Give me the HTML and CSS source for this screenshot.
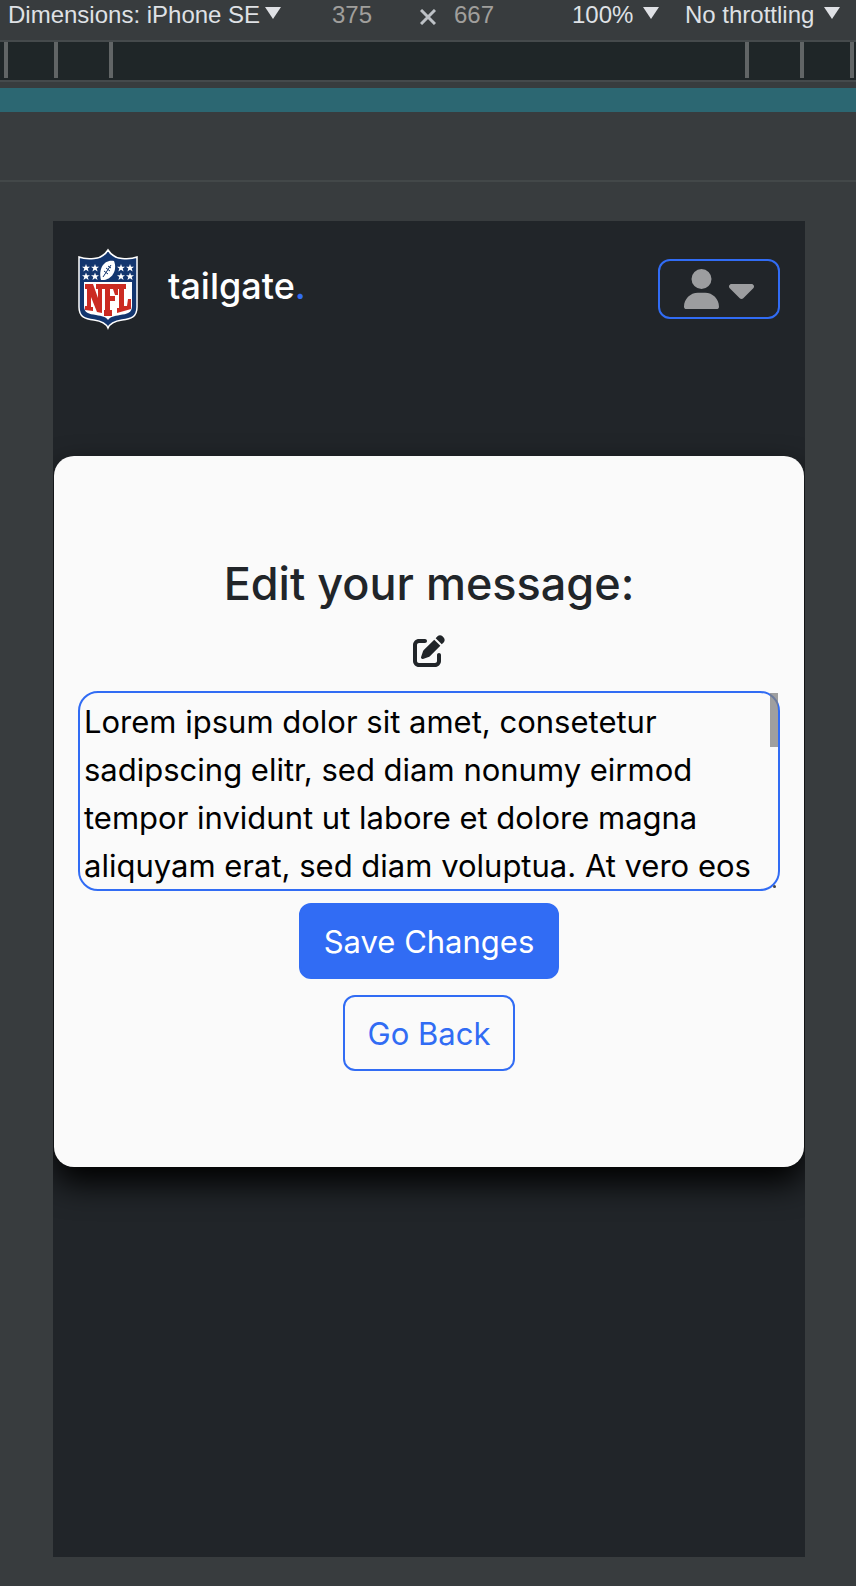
FILE: index.html
```html
<!DOCTYPE html>
<html lang="en">
<head>
<meta charset="utf-8">
<meta name="viewport" content="width=device-width, initial-scale=1">
<title>tailgate.</title>
<link rel="stylesheet" href="styles.css">
</head>
<body>
<div class="toolbar">
  <div class="picker picker-device">
    <select class="picker-select" aria-label="Device"><option>Dimensions: iPhone SE</option></select>
    <svg class="picker-arrow" viewBox="0 0 16 12" aria-hidden="true"><path d="M0 0h16L8 12z"/></svg>
  </div>
  <div class="size">
    <input class="size-input" type="text" value="375" aria-label="Width">
    <svg class="size-times" viewBox="0 0 16 16" aria-hidden="true"><path d="M1 1l14 14M15 1L1 15"/></svg>
    <input class="size-input" type="text" value="667" aria-label="Height">
  </div>
  <div class="picker picker-zoom">
    <select class="picker-select" aria-label="Zoom"><option>100%</option></select>
    <svg class="picker-arrow" viewBox="0 0 16 12" aria-hidden="true"><path d="M0 0h16L8 12z"/></svg>
  </div>
  <div class="picker">
    <select class="picker-select" aria-label="Throttling"><option>No throttling</option></select>
    <svg class="picker-arrow" viewBox="0 0 16 12" aria-hidden="true"><path d="M0 0h16L8 12z"/></svg>
  </div>
</div>
<div class="ruler">
  <div class="ticks"><i></i><i></i><i class="tick-inner"></i></div>
  <div class="ticks ticks-end"><i></i><i></i><i class="tick-inner"></i></div>
</div>
<div class="media"><div class="media-bar"></div></div>
<main class="phone">
  <header class="header">
    <svg class="logo" viewBox="0 0 60 82" role="img" aria-label="NFL">
      <path d="M30 2C27 7 22 10 16 10.500 11 11 6 11 1 9V59C1 69 7 71 16 72 23 73 28 75 30 80 32 75 37 73 44 72 53 71 59 69 59 59V9C54 11 49 11 44 10.500 38 10 33 7 30 2Z" fill="#13366f" stroke="#fff" stroke-width="1.500"/>
      <path d="M6 34H54V58C54 65 49 66 42 67 36 68 32 69 30 72 28 69 24 68 18 67 11 66 6 65 6 58Z" fill="#fff"/>
      <g fill="#cb2b22">
        <path d="M7 36h8l5 14V41h-2v-5h8v5h-2v24l-5-1-6-15v10h2v4l-8-1v-4h2V41H7z"/>
        <path d="M26 36h14v11h-3l-2-6h-3v7h5v5h-5v9h2v6h-8v-6h1V41h-1z"/>
        <path d="M39 36h9v5h-2v17h3l1-7h3v10l-14 4v-5h2V41h-2z"/>
      </g>
      <g fill="#fff">
        <path id="star" d="M8 16l1 2.800h3l-2.300 1.800.9 2.900L8 21.800l-2.600 1.700.9-2.900L4 18.800h3z"/>
        <use href="#star" x="9"/><use href="#star" x="35"/><use href="#star" x="44"/>
        <use href="#star" y="8.500"/><use href="#star" x="9" y="8.500"/><use href="#star" x="35" y="8.500"/><use href="#star" x="44" y="8.500"/>
        <path d="M36 13C26 11 20 21 23 32C33 33 40 23 36 13Z"/>
      </g>
      <path d="M25 29l8-12M26 23l4 3M28 20l4 3M30 18l3 2" fill="none" stroke="#13366f"/>
    </svg>
    <a class="brand" href="#">tailgate<span class="brand-dot">.</span></a>
    <button class="account" type="button" aria-label="Account menu">
      <svg class="icon-user" viewBox="0 0 448 512" aria-hidden="true"><path d="M224 256A128 128 0 1 0 224 0a128 128 0 1 0 0 256zm-45.700 48C79.800 304 0 383.800 0 482.300 0 498.700 13.300 512 29.700 512H418.300c16.400 0 29.700-13.300 29.700-29.700C448 383.800 368.200 304 269.700 304H178.300z"/></svg>
      <svg class="icon-caret" viewBox="0 0 320 512" aria-hidden="true"><path d="M137.400 374.600c12.500 12.500 32.800 12.500 45.300 0l128-128c9.200-9.200 11.900-22.900 6.900-34.900s-16.600-19.800-29.600-19.800L32 192c-12.900 0-24.600 7.800-29.600 19.800s-2.200 25.700 6.900 34.900l128 128z"/></svg>
    </button>
  </header>
  <form class="card">
    <label class="title" for="message">Edit your message:</label>
    <svg class="icon-edit" viewBox="0 0 512 512" aria-hidden="true"><path d="M471.600 21.700c-21.900-21.900-57.300-21.900-79.200 0L362.300 51.700l97.900 97.900 30.100-30.100c21.900-21.900 21.900-57.300 0-79.200L471.600 21.700zm-299.200 220c-6.100 6.100-10.800 13.600-13.500 21.900l-29.600 88.800c-2.900 8.600-.6 18.100 5.800 24.600s15.900 8.700 24.600 5.800l88.800-29.600c8.200-2.700 15.700-7.400 21.900-13.500L437.700 172.300 339.700 74.300 172.400 241.700zM96 64C43 64 0 107 0 160V416c0 53 43 96 96 96H352c53 0 96-43 96-96V320c0-17.700-14.300-32-32-32s-32 14.300-32 32v96c0 17.700-14.300 32-32 32H96c-17.700 0-32-14.300-32-32V160c0-17.700 14.300-32 32-32h96c17.700 0 32-14.300 32-32s-14.300-32-32-32H96z"/></svg>
    <div class="field">
      <textarea class="message" id="message">Lorem ipsum dolor sit amet, consetetur sadipscing elitr, sed diam nonumy eirmod tempor invidunt ut labore et dolore magna aliquyam erat, sed diam voluptua. At vero eos</textarea>
      <span class="thumb"></span>
      <span class="grip"></span>
    </div>
    <button class="btn btn-primary" type="submit">Save Changes</button>
    <button class="btn btn-outline" type="button">Go Back</button>
  </form>
</main>
</body>
</html>
```
FILE: styles.css
```css
* {
  box-sizing: border-box;
}

body {
  margin: 0;
  min-height: 100vh;
  background: #383c3e;
  font-family: Inter, "Liberation Sans", sans-serif;
  color: #212529;
}

.toolbar {
  display: flex;
  align-items: flex-start;
  height: 40px;
  padding: 0 16px 0 8px;
  font-family: "Liberation Sans", Arial, sans-serif;
  font-size: 24px;
  line-height: 30px;
}

.picker {
  display: flex;
  gap: 9px;
}

.picker-device {
  gap: 4px;
  margin-right: 51px;
}

.picker-zoom {
  margin: 0 26px 0 auto;
}

.picker-select {
  appearance: none;
  height: 30px;
  margin: 0;
  padding: 0;
  border: 0;
  background: none;
  color: #dfe1e5;
  font: inherit;
}

.picker-arrow {
  width: 16px;
  height: 12px;
  margin-top: 7px;
  fill: #dfe1e5;
}

.size {
  display: flex;
}

.size-input {
  width: 48px;
  height: 30px;
  padding: 0;
  border: 0;
  background: none;
  color: #a09f9c;
  font: inherit;
}

.size-times {
  width: 16px;
  height: 16px;
  margin: 9px 18px 0 40px;
  fill: none;
  stroke: #bdc1c6;
  stroke-width: 3;
}

.ruler {
  display: flex;
  justify-content: space-between;
  height: 42px;
  padding: 0 2px 2px 4px;
  border-top: 2px solid #454a4c;
  border-bottom: 2px solid #454a4c;
  background: #1f2628;
}

.ticks {
  display: flex;
  gap: 46px;
}

.ticks-end {
  flex-direction: row-reverse;
}

.ticks i {
  width: 4px;
  background: #616566;
}

.ticks .tick-inner {
  margin-left: 5px;
}

.ticks-end .tick-inner {
  margin: 0 5px 0 0;
}

.media {
  height: 100px;
  padding-top: 6px;
  border-bottom: 2px solid #434849;
}

.media-bar {
  height: 24px;
  background: #2c6772;
}

.phone {
  aspect-ratio: 376 / 668;
  margin: 39px 51px 0 53px;
  padding: 0 1px;
  overflow: hidden;
  background: #212529;
}

.header {
  display: flex;
  align-items: center;
  height: 136px;
  padding: 0 24px;
}

.logo {
  width: 60px;
  height: 82px;
}

.brand {
  margin: 0 auto 0 30px;
  padding-bottom: 6px;
  color: #fff;
  font-size: 36px;
  font-weight: 500;
  line-height: 48px;
  text-decoration: none;
}

.brand-dot {
  color: #316cf4;
}

.account {
  display: flex;
  align-items: center;
  justify-content: center;
  gap: 10px;
  width: 122px;
  height: 60px;
  padding: 0;
  border: 2px solid #316cf4;
  border-radius: 12px;
  background: none;
  fill: #9c9d9f;
}

.icon-user {
  width: 35px;
  height: 40px;
}

.icon-caret {
  width: 25px;
  height: 40px;
}

.card {
  display: flex;
  flex-direction: column;
  align-items: center;
  margin-top: 99px;
  padding: 100px 24px 96px;
  border-radius: 20px;
  background: #fafafa;
  box-shadow: 0 16px 32px #000;
}

.title {
  font-size: 45px;
  font-weight: 500;
  line-height: 55px;
}

.icon-edit {
  width: 32px;
  height: 32px;
  margin: 24px 0;
  fill: #212529;
}

.field {
  position: relative;
  align-self: stretch;
  margin-bottom: 12px;
}

.message {
  display: block;
  width: 100%;
  height: 200px;
  padding: 5px 12px 0 4px;
  border: 2px solid #316cf4;
  border-radius: 20px;
  background: none;
  color: #000;
  font: inherit;
  font-size: 31px;
  line-height: 48px;
  resize: none;
  overflow: hidden;
}

.thumb {
  position: absolute;
  top: 2px;
  right: 2px;
  width: 8px;
  height: 54px;
  background: rgba(128, 128, 128, 0.75);
}

.grip {
  position: absolute;
  right: 4px;
  bottom: 3px;
  width: 3px;
  height: 3px;
  border-radius: 50%;
  background: #444;
}

.btn {
  padding: 13px 23px 11px;
  border: 2px solid #316cf4;
  border-radius: 12px;
  font: inherit;
  font-size: 31px;
  line-height: 48px;
}

.btn-primary {
  margin-bottom: 16px;
  background: #316cf4;
  color: #fff;
}

.btn-outline {
  background: none;
  color: #316cf4;
}
```
